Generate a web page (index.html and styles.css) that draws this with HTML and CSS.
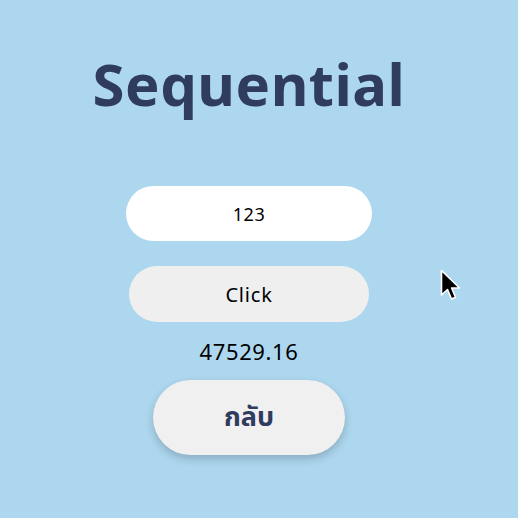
FILE: index.html
```html
<!DOCTYPE html>
<html lang="th">
<head>
<meta charset="utf-8">
<link rel="stylesheet" href="styles.css">
</head>
<body>
<main class="page">
  <h1 class="title">Sequential</h1>
  <div class="field"><input class="input" type="text" value="123"></div>
  <button class="btn">Click</button>
  <p class="result">47529.16</p>
  <button class="back">กลับ</button>
</main>
<svg class="cursor" width="22" height="34" viewBox="0 0 22 34"><path d="M1.5 1.5 L1.5 26 L7.5 20.5 L11.5 30 L15.5 28.3 L11.6 19 L19.5 19 Z" fill="#000" stroke="#fff" stroke-width="1.6" stroke-linejoin="round"/></svg>
</body>
</html>
```
FILE: styles.css
```css
html, body { margin: 0; padding: 0; }
body {
  background: #add7ef;
  width: 518px;
  height: 518px;
  overflow: hidden;
  position: relative;
  font-family: "Noto Sans", "Noto Sans Thai", sans-serif;
}
.page {
  width: 498px;
  display: flex;
  flex-direction: column;
  align-items: center;
  padding-top: 44px;
}
.title {
  margin: 0;
  font-size: 58px;
  font-weight: 700;
  color: #2f3c5e;
  letter-spacing: 0.5px;
  line-height: 80px;
}
.field { margin-top: 62px; }
.input {
  width: 246px;
  height: 55px;
  box-sizing: border-box;
  border: none;
  border-radius: 28px;
  background: #fff;
  text-align: center;
  font-family: inherit;
  font-size: 18px;
  letter-spacing: 0.5px;
  color: #000;
  outline: none;
}
.btn {
  margin-top: 25px;
  width: 240px;
  height: 56px;
  border: none;
  border-radius: 28px;
  background: #efefef;
  font-family: inherit;
  font-size: 20px;
  letter-spacing: 0.8px;
  color: #000;
}
.result {
  margin: 14px 0 0;
  font-size: 22px;
  letter-spacing: 0.6px;
  line-height: 30px;
  color: #000;
}
.back {
  margin-top: 14px;
  width: 192px;
  height: 75px;
  border: none;
  border-radius: 38px;
  background: #f0f0f0;
  font-family: inherit;
  font-size: 27px;
  font-weight: 700;
  color: #2f3c5e;
  box-shadow: 0 4px 8px rgba(0, 0, 0, 0.2);
}
.cursor {
  position: absolute;
  left: 440px;
  top: 269px;
}
```
